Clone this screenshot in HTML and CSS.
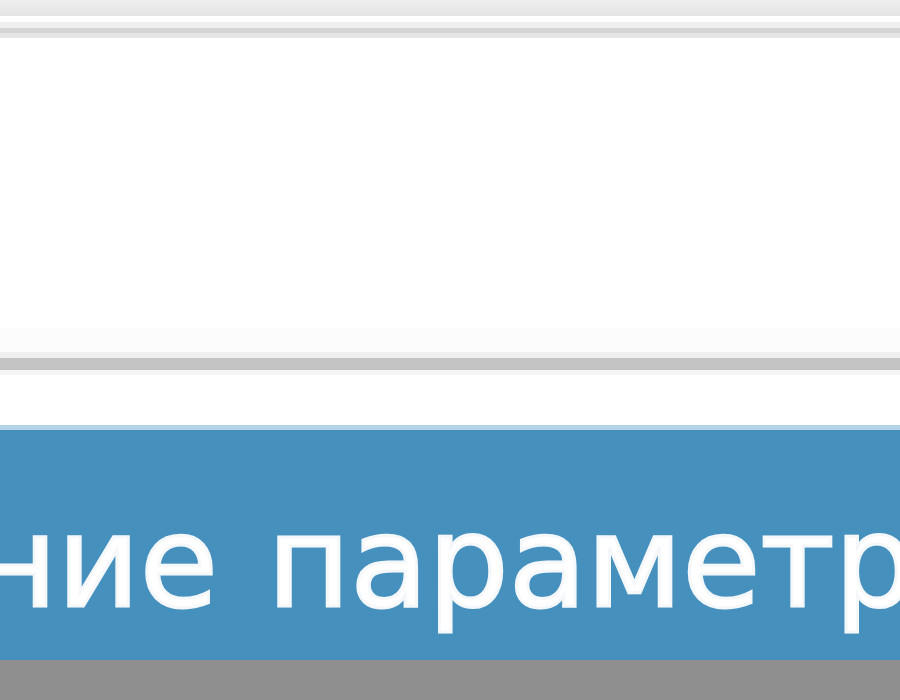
FILE: index.html
```html
<!DOCTYPE html>
<html lang="ru">
<head>
<meta charset="utf-8">
<title>Параметры</title>
<link rel="stylesheet" href="styles.css">
</head>
<body>
<div class="toolbar"></div>
<div class="gap-top"></div>
<div class="field">
  <div class="field-top"></div>
  <div class="field-body"></div>
  <div class="field-bottom"></div>
</div>
<div class="spacer"></div>
<div class="header">
  <div class="header-title">Сохранение параметров</div>
</div>
<div class="footer"></div>
</body>
</html>
```
FILE: styles.css
```css
html, body {
  margin: 0;
  padding: 0;
  width: 900px;
  height: 700px;
  overflow: hidden;
  background: #ffffff;
  font-family: "DejaVu Sans", Verdana, sans-serif;
}
.toolbar {
  height: 16px;
  background: linear-gradient(#eeeeee, #e4e4e4);
}
.gap-top {
  height: 6px;
}
.field-top {
  height: 6px;
  background: #efefef;
  border-bottom: 5px solid #d5d5d5;
  box-shadow: 0 5px 0 #e6e6e6;
  margin-bottom: 5px;
}
.field-body {
  height: 314px;
  background: linear-gradient(#ffffff 0, #ffffff 290px, #fcfcfc 290px, #fcfcfc 100%);
}
.field-bottom {
  height: 6px;
  background: #efefef;
  border-bottom: 12px solid #c3c3c3;
  box-shadow: 0 5px 0 #f5f5f5;
  margin-bottom: 5px;
}
.spacer {
  height: 50px;
}
.header {
  height: 230px;
  background: #4690be;
  border-top: 5px solid #b5d3e6;
  overflow: hidden;
}
.header-title {
  color: #ffffff;
  -webkit-text-stroke: 3px #f4f8fb;
  font-size: 127px;
  line-height: 1;
  white-space: nowrap;
  word-spacing: 9px;
  text-indent: -587px;
  padding-top: 69px;
}
.footer {
  height: 40px;
  background: #8f8f8f;
}
```
